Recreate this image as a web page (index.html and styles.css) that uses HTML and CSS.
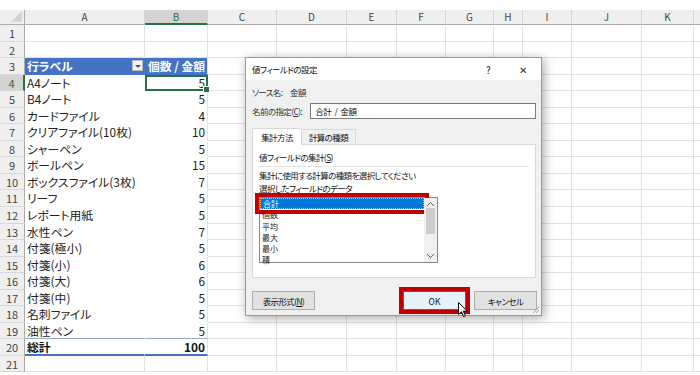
FILE: index.html
```html
<!DOCTYPE html>
<html lang="ja">
<head>
    <meta charset="UTF-8" />
    <title>値フィールドの設定</title>
    <link rel="stylesheet" href="styles.css">
</head>
<body>
    <div class="sheet" id="sheet"></div>

    <div class="dialog">
        <div class="titlebar">
            <span class="title">値フィールドの設定</span>
            <span class="tb-help">?</span>
            <span class="tb-close">✕</span>
        </div>
        <div class="dlg-body">
            <div class="src-line"><span class="src-lbl">ソース名:</span><span>金額</span></div>
            <div class="name-line">
                <span class="name-lbl">名前の指定(<u>C</u>):</span>
                <div class="input">合計 / 金額</div>
            </div>
            <div class="tabs">
                <div class="tab tab-on">集計方法</div>
                <div class="tab">計算の種類</div>
            </div>
            <div class="panel">
                <div class="group">値フィールドの集計(<u>S</u>)</div>
                <p>集計に使用する計算の種類を選択してください</p>
                <p>選択したフィールドのデータ</p>
                <div class="listbox">
                    <ul>
                        <li class="sel">合計</li>
                        <li>個数</li>
                        <li>平均</li>
                        <li>最大</li>
                        <li>最小</li>
                        <li>積</li>
                    </ul>
                    <div class="vscroll">
                        <svg width="9" height="6" viewBox="0 0 9 6"><path d="M1 5 L4.5 1.5 L8 5" fill="none" stroke="#606060" stroke-width="1"/></svg>
                        <div class="thumb"></div>
                        <svg class="down" width="9" height="6" viewBox="0 0 9 6"><path d="M1 1 L4.5 4.5 L8 1" fill="none" stroke="#606060" stroke-width="1"/></svg>
                    </div>
                </div>
            </div>
            <div class="buttons">
                <button class="btn">表示形式(<u>N</u>)</button>
                <span class="spacer"></span>
                <button class="btn ok">OK</button>
                <button class="btn">キャンセル</button>
            </div>
        </div>
        <svg class="grip" width="8" height="8" viewBox="0 0 8 8">
            <path d="M7 1 L1 7 M7 4 L4 7" stroke="#a0a0a0" stroke-width="1"/>
        </svg>
        <svg class="cursor" width="11" height="16" viewBox="0 0 11 16">
            <path d="M0.5 0.5 L0.5 12.5 L3.5 9.8 L5.6 14.6 L7.4 13.8 L5.3 9.1 L9.3 9.1 Z" fill="#fff" stroke="#000" stroke-width="1"/>
        </svg>
    </div>

    <script>
        const letters = ['A', 'B', 'C', 'D', 'E', 'F', 'G', 'H', 'I', 'J', 'K'];
        const items = [
            ['A4ノート', 5], ['B4ノート', 5], ['カードファイル', 4], ['クリアファイル(10枚)', 10],
            ['シャーペン', 5], ['ボールペン', 15], ['ボックスファイル(3枚)', 7], ['リーフ', 5],
            ['レポート用紙', 5], ['水性ペン', 7], ['付箋(極小)', 5], ['付箋(小)', 6],
            ['付箋(大)', 6], ['付箋(中)', 5], ['名刺ファイル', 5], ['油性ペン', 5]
        ];
        const sheet = document.getElementById('sheet');

        function cell(cls, html) {
            const el = document.createElement('div');
            el.className = cls;
            if (html !== undefined) el.innerHTML = html;
            sheet.appendChild(el);
            return el;
        }

        // kolomkoppen
        cell('hd corner');
        letters.forEach(l => cell('hd' + (l === 'B' ? ' hd-sel' : ''), l));
        cell('hd filler');

        for (let r = 1; r <= 21; r++) {
            cell('rh' + (r === 4 ? ' rh-sel' : ''), r);
            let a = '', b = '', cls = '';
            if (r === 3) {
                cls = ' pv pv-head';
                a = '<span>行ラベル</span><span class="drop"></span>';
                b = '個数 / 金額';
            } else if (r >= 4 && r <= 19) {
                cls = ' pv' + (r === 19 ? ' pv-last' : '');
                a = items[r - 4][0];
                b = items[r - 4][1];
            } else if (r === 20) {
                cls = ' pv pv-total';
                a = '総計';
                b = '100';
            }
            cell('c ca' + cls, a);
            cell('c cb num' + cls + (r === 4 ? ' cur' : ''), b);
            for (let i = 2; i < letters.length; i++) cell('c');
            cell('c filler');
        }
    </script>
</body>
</html>
```

FILE: styles.css
```css
* {
    box-sizing: border-box;
}

body {
    margin: 0;
    background: #fff;
    font-family: 'Noto Sans CJK JP', 'Noto Sans', sans-serif;
    font-feature-settings: "palt";
    color: #222;
    overflow: hidden;
}

/* ---------- werkblad ---------- */

.sheet {
    display: grid;
    grid-template-columns: 25px 120px 63px 69px 70px 50px 49px 48px 29px 49px 70px 52px 1fr;
    grid-template-rows: 15px;
    grid-auto-rows: 16.55px;
    margin-top: 10px;
    font-size: 11.8px;
}

.hd {
    background: #efefef;
    border-right: 1px solid #d6d6d6;
    border-bottom: 1px solid #ababab;
    text-align: center;
    font-size: 10px;
    line-height: 14px;
    color: #444;
}

.hd.corner {
    position: relative;
    border-right-color: #ababab;
}

    .hd.corner::after {
        content: '';
        position: absolute;
        right: 2px;
        bottom: 2px;
        border-left: 11px solid transparent;
        border-bottom: 11px solid #d4d4d4;
    }

.hd.hd-sel {
    background: #d3d3d3;
    color: #217346;
    border-bottom: 2px solid #217346;
}

.hd.filler {
    border-right: none;
}

.rh {
    background: #efefef;
    border-right: 1px solid #ababab;
    border-bottom: 1px solid #d8d8d8;
    text-align: center;
    font-size: 11px;
    line-height: 16px;
    color: #444;
}

.rh.rh-sel {
    background: #d3d3d3;
    color: #217346;
    border-right: 2px solid #217346;
}

.c {
    border-right: 1px solid #e2e2e2;
    border-bottom: 1px solid #e2e2e2;
    padding: 0 2px;
    line-height: 16px;
    white-space: nowrap;
    overflow: hidden;
}

.c.filler {
    border-right: none;
}

.num {
    text-align: right;
}

.pv {
    background: #fff;
    border-bottom-color: #fff;
}

.ca.pv {
    border-right-color: #fff;
}

.pv-head {
    background: #4472c4;
    border-bottom-color: #4472c4;
    color: #fff;
    font-weight: bold;
}

.ca.pv-head {
    border-right-color: #4472c4;
    display: flex;
    justify-content: space-between;
    align-items: center;
    overflow: visible;
}

.drop {
    width: 11px;
    height: 11px;
    margin-right: -1px;
    background: #f2f2f2;
    border: 1px solid #b8b8b8;
    position: relative;
}

    .drop::after {
        content: '';
        position: absolute;
        left: 2px;
        top: 4px;
        border-left: 3px solid transparent;
        border-right: 3px solid transparent;
        border-top: 3px solid #555;
    }

.pv-last {
    border-bottom-color: #8eaadb;
}

.pv-total {
    font-weight: bold;
    border-bottom: 2px solid #4472c4;
    color: #111;
}

.cur {
    outline: 2px solid #217346;
    outline-offset: -2px;
    position: relative;
    overflow: visible;
}

    .cur::after {
        content: '';
        position: absolute;
        right: -3px;
        bottom: -3px;
        width: 5px;
        height: 5px;
        background: #217346;
        border: 1px solid #fff;
    }

/* ---------- dialoog ---------- */

.dialog {
    position: absolute;
    left: 245px;
    top: 57px;
    width: 297px;
    height: 259px;
    background: #f0f0f0;
    border: 1px solid #9a9a9a;
    box-shadow: 2px 2px 10px rgba(0, 0, 0, 0.35);
    font-size: 8.5px;
    letter-spacing: -0.6px;
    color: #111;
}

.titlebar {
    height: 22px;
    background: #fff;
    display: flex;
    align-items: center;
    padding-left: 6px;
}

    .titlebar .title {
        flex: 1;
    }

.tb-help {
    width: 33px;
    font-size: 10px;
}

.tb-close {
    width: 22px;
    font-size: 10px;
    color: #333;
}

.dlg-body {
    padding: 5px 4px 0 6px;
}

.src-line {
    height: 14px;
    line-height: 14px;
    color: #333;
}

.src-lbl {
    display: inline-block;
    width: 38px;
}

.name-line {
    display: flex;
    align-items: center;
    margin-top: 4px;
    gap: 8px;
}

.name-lbl {
    color: #333;
}

.input {
    flex: 1;
    height: 16px;
    line-height: 14px;
    background: #fff;
    border: 1px solid #7a7a7a;
    padding-left: 4px;
    margin-right: 1px;
    word-spacing: 2px;
}

.tabs {
    display: flex;
    align-items: flex-end;
    margin-top: 8px;
    height: 17px;
}

.tab {
    height: 15px;
    line-height: 14px;
    padding: 0;
    white-space: nowrap;
    border: 1px solid #d9d9d9;
    border-bottom: none;
    background: #f0f0f0;
    width: 55px;
    text-align: center;
}

.tab.tab-on {
    height: 17px;
    width: 49px;
    background: #fff;
    border-right: none;
    line-height: 17px;
    position: relative;
    top: 1px;
}

.panel {
    height: 134px;
    margin-right: 1px;
    background: #fff;
    border: 1px solid #d9d9d9;
    padding: 5px 6px 0 6px;
}

.group {
    line-height: 14px;
    padding-bottom: 2px;
    border-bottom: 1px solid #e3e3e3;
    margin-bottom: 2px;
}

.panel p {
    margin: 0;
    line-height: 13px;
}

.listbox {
    margin-top: 2px;
    width: 179px;
    height: 66px;
    border: 1px solid #828790;
    display: flex;
    background: #fff;
}

    .listbox ul {
        list-style: none;
        margin: 0;
        padding: 0;
        flex: 1;
        font-size: 8px;
        letter-spacing: 0;
    }

    .listbox li {
        height: 11.3px;
        line-height: 11px;
        padding-left: 2px;
        color: #222;
    }

    .listbox li.sel {
        background: #0078d7;
        color: #fff;
        border: 1px dotted #f5b042;
        line-height: 9px;
        outline: 4px solid #c00000;
        outline-offset: 1px;
    }

.vscroll {
    width: 13px;
    display: flex;
    flex-direction: column;
    align-items: center;
    padding-top: 3px;
    background: #f0f0f0;
}

    .vscroll .thumb {
        width: 9px;
        height: 26px;
        margin-top: 1px;
        background: #cdcdcd;
    }

    .vscroll .down {
        margin-top: auto;
        margin-bottom: 3px;
    }

.buttons {
    display: flex;
    margin-top: 13px;
    gap: 9px;
}

.spacer {
    flex: 1;
}

.btn {
    width: 63px;
    height: 19px;
    padding: 0;
    font: inherit;
    letter-spacing: inherit;
    color: #111;
    background: #e1e1e1;
    border: 1px solid #adadad;
}

.btn.ok {
    background: #e5f1fb;
    border-color: #0078d7;
    outline: 4px solid #c00000;
    outline-offset: 0;
    margin-right: -1px;
    letter-spacing: 0;
}

.grip {
    position: absolute;
    right: 1px;
    bottom: 1px;
}

.cursor {
    position: absolute;
    left: 212px;
    top: 244px;
}
```
